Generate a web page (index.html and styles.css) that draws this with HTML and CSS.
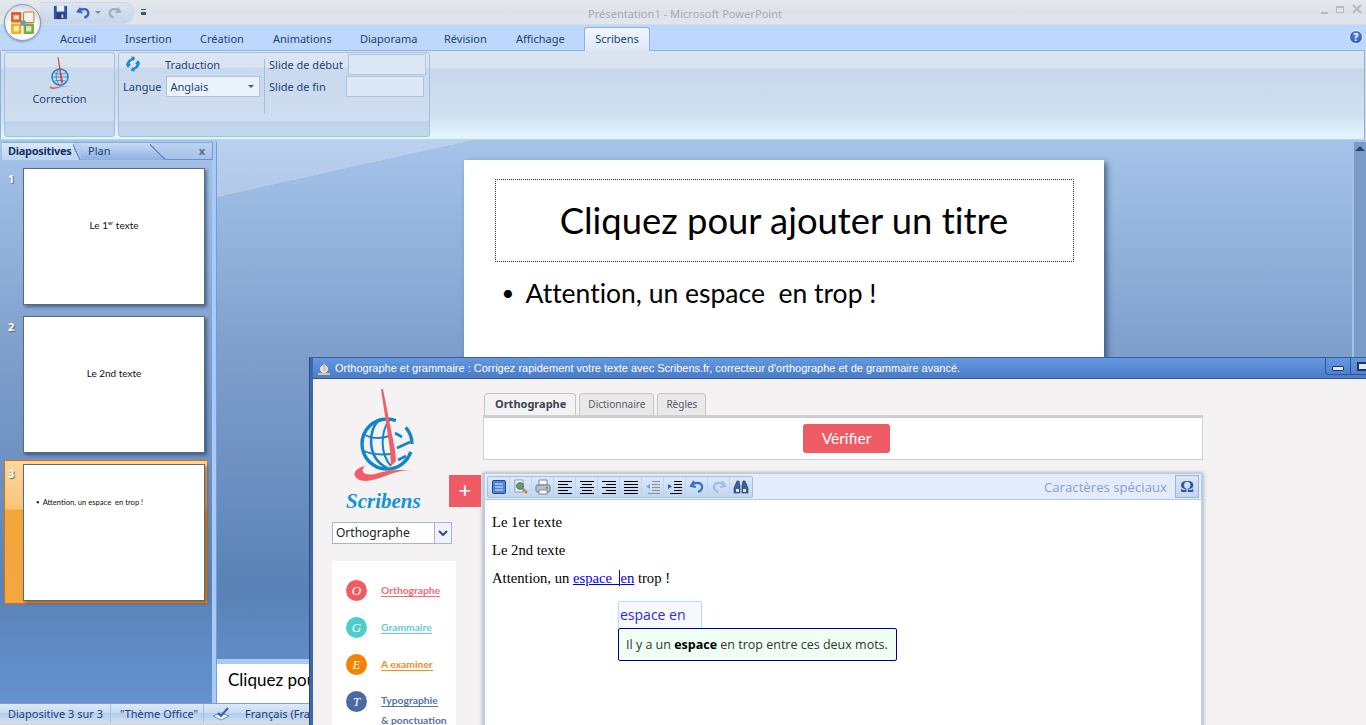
FILE: index.html
```html
<!DOCTYPE html>
<html lang="fr">
<head>
  <meta charset="utf-8">
  <title>Présentation1 - Microsoft PowerPoint</title>
  <link rel="stylesheet" href="styles.css">
</head>
<body>
<div class="app">

  <div class="titlebar">
    <div class="qat">
      <svg class="qat-icon" viewBox="0 0 16 16" width="15" height="15"><rect x="1" y="1" width="14" height="14" fill="#2f4f9f"/><rect x="4" y="1" width="8" height="6" fill="#e8eefa"/><rect x="4" y="9" width="8" height="6" fill="#27377a"/><rect x="9" y="10" width="2" height="4" fill="#c9d5ee"/></svg>
      <svg class="qat-icon" viewBox="0 0 16 16" width="15" height="15"><path d="M5 3 2 7l5 1M3 6.500c3-3 9-3 10 1 .6 2.700-1.500 5-4 6" fill="none" stroke="#3466b8" stroke-width="2.400"/></svg>
      <span class="qat-drop"></span>
      <svg class="qat-icon" viewBox="0 0 16 16" width="15" height="15"><path d="M11 3l3 4-5 1M13 6.500c-3-3-9-3-10 1-.6 2.700 1.500 5 4 6" fill="none" stroke="#a3adb9" stroke-width="2.400"/></svg>
    </div>
    <span class="qat-more"></span>
    <span class="app-title">Présentation1 - Microsoft PowerPoint</span>
    <div class="win-btns">
      <span class="win-min"></span>
      <span class="win-max"></span>
      <svg viewBox="0 0 10 10" width="10" height="10"><path d="M1 1l8 8M9 1 1 9" stroke="#b6bac0" stroke-width="2"/></svg>
    </div>
  </div>

  <div class="office-btn">
    <svg viewBox="0 0 24 24" width="25" height="25">
      <rect x="1" y="2" width="10" height="10" rx="1" fill="#e2632a"/>
      <rect x="3.500" y="5" width="5" height="4" fill="#fbe7d2"/>
      <rect x="13" y="2" width="10" height="10" rx="1" fill="#f6f2e6" stroke="#d8742e"/>
      <rect x="1" y="13" width="10" height="10" rx="1" fill="#f2b21c"/>
      <rect x="3.500" y="15.500" width="5" height="5" fill="#fbeab8"/>
      <rect x="13" y="13" width="10" height="10" rx="1" fill="#78ac3c"/>
      <rect x="15.500" y="15.500" width="5" height="5" fill="#dcebc2"/>
      <rect x="10" y="10" width="5" height="5" fill="#5f9bd0"/>
    </svg>
  </div>

  <div class="tabbar">
    <span class="tab t-accueil">Accueil</span>
    <span class="tab t-insertion">Insertion</span>
    <span class="tab t-creation">Création</span>
    <span class="tab t-animations">Animations</span>
    <span class="tab t-diaporama">Diaporama</span>
    <span class="tab t-revision">Révision</span>
    <span class="tab t-affichage">Affichage</span>
    <span class="tab tab-active">Scribens</span>
    <span class="help">?</span>
  </div>

  <div class="ribbon">
    <div class="group group-correction">
      <svg class="mini-logo" viewBox="0 0 24 34" width="24" height="34">
        <circle cx="12" cy="21" r="8" fill="none" stroke="#1d7fc0" stroke-width="1.400"/>
        <path d="M11 13c-4 4-4 12 1 16M4 21h16M5.500 16.500c4 2 9 2 13 0M5.500 25.500c4-1.500 9-1.500 13 0" fill="none" stroke="#1d7fc0" stroke-width=".8"/>
        <path d="M9.500 1 10.500 1 15 27 13 27z" fill="#c9474f"/>
        <path d="M24 31c-6-2-12 1-18 2-3 .4-5-1-4-3 1 1.500 4 1.500 7 1 5-.8 10-2 15 0z" fill="#df5c64"/>
      </svg>
      <span class="group-text">Correction</span>
    </div>
    <div class="group group-trad">
      <div class="trad-col">
        <div class="trad-row">
          <svg viewBox="0 0 16 16" width="16" height="16"><path d="M1 9C2 5 4 3 7 2L6 .5 10 1 9 5 8 4C6 5 5 6 4.500 8L6 8 3 12z" fill="#1a8ad0"/><path d="M15 7C14 11 12 13 9 14L10 15.500 6 15 7 11 8 12C10 11 11 10 11.500 8L10 8 13 4z" fill="#1a8ad0"/></svg>
          <span class="group-text trad-label">Traduction</span>
        </div>
        <div class="trad-row lang-row">
          <span class="group-text">Langue</span>
          <div class="lang-select"><span>Anglais</span><i class="caret"></i></div>
        </div>
      </div>
      <div class="group-sep"></div>
      <div class="slide-range">
        <div class="range-row">
          <span class="group-text range-label-a">Slide de début</span>
          <span class="range-input"></span>
        </div>
        <div class="range-row">
          <span class="group-text range-label-b">Slide de fin</span>
          <span class="range-input"></span>
        </div>
      </div>
    </div>
  </div>

  <div class="main">
    <div class="sidebar">
      <div class="side-tabs">
        <span class="side-tab side-tab-on">Diapositives</span>
        <span class="side-tab side-tab-plan">Plan</span>
        <span class="side-close">x</span>
      </div>
      <div class="thumb-row">
        <span class="thumb-num">1</span>
        <div class="thumb thumb-center"><span>Le 1<sup>er</sup> texte</span></div>
      </div>
      <div class="thumb-row">
        <span class="thumb-num">2</span>
        <div class="thumb thumb-center"><span>Le 2nd texte</span></div>
      </div>
      <div class="thumb-row thumb-row-on">
        <span class="thumb-num">3</span>
        <div class="thumb thumb-list"><span>▪&nbsp; Attention, un espace&nbsp; en trop !</span></div>
      </div>
    </div>
    <div class="splitter"></div>
    <div class="workspace">
      <div class="stage">
        <div class="slide">
          <div class="slide-title">Cliquez pour ajouter un titre</div>
          <div class="slide-bullet"><span class="bullet-dot">•</span><span>Attention, un espace&nbsp; en trop !</span></div>
        </div>
      </div>
      <div class="notes">Cliquez pou</div>
    </div>
    <div class="scrollbar"><i class="scroll-up"></i></div>
  </div>

  <div class="statusbar">
    <span class="status-cell status-a">Diapositive 3 sur 3</span>
    <span class="status-cell status-b">"Thème Office"</span>
    <span class="status-cell status-c">
      <svg viewBox="0 0 18 14" width="18" height="14"><path d="M1 9l8-3 8 3-8 4z" fill="#f2f5fb" stroke="#6f8db8"/><path d="M6 6l3 3 7-8" fill="none" stroke="#34619f" stroke-width="2"/></svg>
      <span>Français (Fra</span>
    </span>
  </div>

  <!-- fenetre Scribens par dessus PowerPoint -->
  <div class="dialog">
    <div class="dlg-title">
      <svg viewBox="0 0 14 14" width="14" height="14"><circle cx="7" cy="8" r="4.500" fill="#d7e6f5" stroke="#4e8ac6"/><path d="M7 0 9 10H6z" fill="#e7b96b"/><path d="M1 13h12" stroke="#e9c27b" stroke-width="2"/></svg>
      <span class="dlg-title-text">Orthographe et grammaire : Corrigez rapidement votre texte avec Scribens.fr, correcteur d'orthographe et de grammaire avancé.</span>
      <div class="dlg-btns">
        <span class="dlg-btn"><i class="dlg-min"></i></span>
        <span class="dlg-btn"><i class="dlg-max"></i></span>
      </div>
    </div>
    <div class="dlg-body">
      <div class="dlg-left">
        <svg class="logo" viewBox="0 0 84 98" width="84" height="98">
          <g fill="none" stroke="#1484c8">
            <circle cx="42" cy="56" r="25" stroke-width="3.400" stroke-dasharray="118 12 27" stroke-dashoffset="-8"/>
            <path d="M35 31C22 42 22 70 42 80" stroke-width="2.600"/>
            <path d="M45 31C35 44 35 66 46 78" stroke-width="2"/>
            <path d="M18 46C27 51 36 51 44 48" stroke-width="2"/>
            <path d="M17 62C26 67 36 67 46 66" stroke-width="2"/>
            <path d="M50 45 57 49M52 60 65 54M53 72 61 68" stroke-width="2.600"/>
          </g>
          <path d="M36 1 38 1 50 62 51 73 46 78 45 62z" fill="#ef5f68"/>
          <path d="M73 85C60 80 50 84 40 88 28 93 14 96 10 88 8 84 12 80 20 78 14 84 20 88 30 86 44 82 58 80 73 85z" fill="#ef5f68"/>
        </svg>
        <div class="logo-word">Scribens</div>
        <div class="mode-select">
          <span class="mode-val">Orthographe</span>
          <span class="mode-btn"><svg viewBox="0 0 10 6" width="10" height="6"><path d="M1 1l4 4 4-4" fill="none" stroke="#2c4a80" stroke-width="2"/></svg></span>
        </div>
        <div class="legend">
          <div class="legend-item"><span class="dot dot-o">O</span><span class="lab lab-o">Orthographe</span></div>
          <div class="legend-item"><span class="dot dot-g">G</span><span class="lab lab-g">Grammaire</span></div>
          <div class="legend-item"><span class="dot dot-e">E</span><span class="lab lab-e">A examiner</span></div>
          <div class="legend-item legend-last"><span class="dot dot-t">T</span><span class="lab-wrap"><span class="lab lab-t">Typographie </span><span class="lab-sub">&amp; ponctuation</span></span></div>
        </div>
      </div>
      <div class="dlg-right">
        <div class="dlg-tabs">
          <span class="dlg-tab dlg-tab-on">Orthographe</span>
          <span class="dlg-tab">Dictionnaire</span>
          <span class="dlg-tab">Règles</span>
        </div>
        <div class="verify-panel"><span class="verify-btn">Vérifier</span></div>
        <div class="editor">
          <span class="plus-btn">+</span>
          <div class="toolbar">
            <div class="tool-group">
              <span class="tool"><svg viewBox="0 0 16 16" width="16" height="16"><rect x="1.500" y="1.500" width="13" height="13" rx="1" fill="#4f84d2" stroke="#27498f"/><path d="M4 5h8M4 8h8M4 11h8" stroke="#dfeafa"/></svg></span>
              <span class="tool"><svg viewBox="0 0 16 16" width="16" height="16"><path d="M2 1h8v12H2z" fill="#fff" stroke="#8a93a5"/><circle cx="7" cy="7" r="3.500" fill="#57a36a" stroke="#5f6f85"/><path d="M10 10l4 4" stroke="#c98a2c" stroke-width="2.500"/></svg></span>
              <span class="tool"><svg viewBox="0 0 16 16" width="16" height="16"><path d="M4 1h8v5H4z" fill="#fff" stroke="#7a8596"/><rect x="1" y="6" width="14" height="7" rx="1.500" fill="#b9c1cc" stroke="#6a7484"/><rect x="4" y="11" width="8" height="4" fill="#fff" stroke="#7a8596"/><rect x="11" y="8" width="2" height="1.500" fill="#27a04a"/></svg></span>
              <span class="tool"><svg viewBox="0 0 16 16" width="16" height="16"><path d="M1 2.500h14M1 5.500h10M1 8.500h14M1 11.500h10M1 14.500h14" stroke="#000"/></svg></span>
              <span class="tool"><svg viewBox="0 0 16 16" width="16" height="16"><path d="M1 2.500h14M3 5.500h10M1 8.500h14M3 11.500h10M1 14.500h14" stroke="#000"/></svg></span>
              <span class="tool"><svg viewBox="0 0 16 16" width="16" height="16"><path d="M1 2.500h14M5 5.500h10M1 8.500h14M5 11.500h10M1 14.500h14" stroke="#000"/></svg></span>
              <span class="tool"><svg viewBox="0 0 16 16" width="16" height="16"><path d="M1 2.500h14M1 5.500h14M1 8.500h14M1 11.500h14M1 14.500h14" stroke="#000"/></svg></span>
              <span class="tool tool-off"><svg viewBox="0 0 16 16" width="16" height="16"><path d="M7 2.500h8M7 5.500h8M7 8.500h8M7 11.500h8M3 14.500h12" stroke="#444"/><path d="M1 7.500 5 5v5z" fill="#2a62c0"/></svg></span>
              <span class="tool"><svg viewBox="0 0 16 16" width="16" height="16"><path d="M7 2.500h8M7 5.500h8M7 8.500h8M7 11.500h8M3 14.500h12" stroke="#000"/><path d="M5 7.500 1 5v5z" fill="#2a62c0"/></svg></span>
              <span class="tool"><svg viewBox="0 0 16 16" width="16" height="16"><path d="M5 2 2 7l5 1M3 6c3-3 9-3 10 1 .6 2.700-1.500 5-4 6" fill="none" stroke="#3a70c4" stroke-width="2.200"/></svg></span>
              <span class="tool tool-off"><svg viewBox="0 0 16 16" width="16" height="16"><path d="M11 2l3 5-5 1M13 6c-3-3-9-3-10 1-.6 2.700 1.500 5 4 6" fill="none" stroke="#6f9bd8" stroke-width="2.200"/></svg></span>
              <span class="tool"><svg viewBox="0 0 16 16" width="16" height="16"><path d="M4 2h2l1 5v7H1V9zM10 2h2l3 7v5H9V7z" fill="#3c5f9e" stroke="#1d3161" stroke-width=".6"/><path d="M3 10h3v3H3zM10 10h3v3h-3z" fill="#dbe6f6"/></svg></span>
            </div>
            <span class="special-label">Caractères spéciaux</span>
            <span class="omega">Ω</span>
          </div>
          <div class="editor-text">
            <p>Le 1er texte</p>
            <p>Le 2nd texte</p>
            <p>Attention, un <a class="err" href="#">espace&nbsp; <span class="err-caret">en</span></a> trop !</p>
            <div class="hint">
              <div class="hint-word">espace en</div>
              <div class="hint-msg">Il y a un <b>espace</b> en trop entre ces deux mots.</div>
            </div>
          </div>
        </div>
      </div>
    </div>
  </div>

</div>
</body>
</html>
```

FILE: styles.css
```css
* {
  box-sizing: border-box;
}

html, body {
  margin: 0;
  height: 100%;
  overflow: hidden;
}

body {
  font-family: "Noto Sans", "DejaVu Sans", sans-serif;
  font-size: 11px;
  color: #15428b;
}

.app {
  position: relative;
  width: 1366px;
  height: 725px;
  display: flex;
  flex-direction: column;
  overflow: hidden;
  background: #d9d6cc;
}

/* barre de titre */
.titlebar {
  height: 25px;
  flex: none;
  display: flex;
  align-items: center;
  position: relative;
  padding-left: 40px;
  background: linear-gradient(#e6e8ec, #dde2ea 50%, #e2e6ec);
  border-bottom: 1px solid #cfdcee;
}

.qat {
  width: 94px;
  height: 22px;
  margin-top: 1px;
  display: flex;
  align-items: center;
  padding-left: 13px;
  gap: 8px;
  background: linear-gradient(#dce4f0, #c6d6ec);
  border: 1px solid #cdd7e6;
  border-left: none;
  border-radius: 0 11px 11px 0;
}

.qat-drop {
  width: 0;
  height: 0;
  margin: 0 -2px 0 -4px;
  border: 3px solid transparent;
  border-top: 3px solid #7c8aa0;
  border-bottom: none;
}

.qat-more {
  width: 5px;
  height: 6px;
  margin-left: 7px;
  border-top: 1px solid #44546e;
  border-bottom: 3px solid #44546e;
}

.app-title {
  position: absolute;
  left: 588px;
  top: 6px;
  color: #a7abb2;
  font-size: 11.100px;
}

.win-btns {
  position: absolute;
  right: 4px;
  top: 4px;
  display: flex;
  align-items: center;
  gap: 8px;
}

.win-min {
  width: 7px;
  height: 2px;
  margin-top: 7px;
  background: #b6bac0;
}

.win-max {
  width: 8px;
  height: 7px;
  border: 1px solid #b6bac0;
  border-top-width: 2px;
}

.office-btn {
  position: absolute;
  left: 4px;
  top: 4px;
  width: 37px;
  height: 37px;
  z-index: 3;
  border-radius: 50%;
  display: flex;
  align-items: center;
  justify-content: center;
  background: radial-gradient(circle at 50% 70%, #f6f9fd 50%, #b9c4d2 100%);
  border: 1px solid #8d99aa;
  box-shadow: 0 1px 2px rgba(70, 90, 120, .5);
}

/* onglets du ruban */
.tabbar {
  height: 25px;
  flex: none;
  position: relative;
  background: #bdd8fc;
}

.tab {
  position: absolute;
  top: 6px;
  color: #1e3f74;
}

.t-accueil { left: 60px; }
.t-insertion { left: 125px; }
.t-creation { left: 200px; }
.t-animations { left: 273px; }
.t-diaporama { left: 360px; }
.t-revision { left: 444px; }
.t-affichage { left: 516px; }

.tab-active {
  left: 584px;
  top: 2px;
  width: 66px;
  height: 24px;
  text-align: center;
  line-height: 21px;
  background: linear-gradient(#f0f6fe, #dce8f8);
  border: 1px solid #8fb0dc;
  border-bottom: none;
  border-radius: 3px 3px 0 0;
  z-index: 1;
}

.help {
  position: absolute;
  right: 3px;
  top: 5px;
  width: 14px;
  height: 14px;
  border-radius: 50%;
  background: radial-gradient(circle at 50% 35%, #5d8fe8, #1d44b0);
  border: 1px solid #e8f0fb;
  color: #fff;
  font-size: 10px;
  font-weight: bold;
  line-height: 12px;
  text-align: center;
}

.ribbon {
  height: 90px;
  flex: none;
  display: flex;
  gap: 3px;
  padding: 1px 2px 2px 3px;
  background: linear-gradient(#dae4f1 0, #d8e3f0 17px, #c6d7ed 18px, #d1e1f0 66px, #e3f3fd 84px);
  border: 1px solid #8eb0dc;
  border-top-color: #8db2e4;
  border-bottom-color: #a8e0e8;
  border-radius: 2px;
  margin-right: 1px;
}

.group {
  height: 85px;
  position: relative;
  background: linear-gradient(#dce6f3 0, #dae4f1 14px, #c9d9ee 15px, #cfdff0 68px, #bdd2e9 69px, #c5d8ec 85px);
  border: 1px solid #a8bfdc;
  border-radius: 3px;
}

.group-text {
  color: #1e3f74;
}

.group-correction {
  width: 111px;
  display: flex;
  flex-direction: column;
  align-items: center;
  padding-top: 3px;
}

.mini-logo {
  display: block;
}

.group-correction .group-text {
  margin-top: 1px;
}

.group-trad {
  width: 312px;
  display: flex;
  padding: 0 0 0 4px;
}

.trad-col {
  width: 137px;
  flex: none;
}

.trad-row {
  display: flex;
  align-items: center;
  height: 22px;
}

.trad-row svg {
  margin-left: 2px;
}

.trad-label {
  margin-left: 24px;
}

.lang-row {
  gap: 4px;
}

.lang-select {
  width: 94px;
  height: 21px;
  flex: none;
  display: flex;
  align-items: center;
  justify-content: space-between;
  padding: 0 5px 0 4px;
  background: #eaf2fb;
  border: 1px solid #adc3df;
  color: #1e3f74;
}

.caret {
  border: 3px solid transparent;
  border-top: 3px solid #3a5c92;
  border-bottom: none;
}

.group-sep {
  width: 1px;
  height: 55px;
  margin: 6px 4px 0 4px;
  background: #a4bedd;
}

.range-row {
  height: 22px;
  display: flex;
  align-items: center;
}

.range-input {
  width: 78px;
  height: 21px;
  background: #dce8f5;
  border: 1px solid #adc3df;
}

.range-label-a { width: 79px; }
.range-label-b { width: 77px; }

/* zone principale */
.main {
  flex: 1;
  min-height: 0;
  display: flex;
  background: linear-gradient(#a6c4ea 0, #7e9ecb 218px, #5a82b6 450px, #6492d0 563px);
}

.sidebar {
  width: 212px;
  flex: none;
  padding: 2px 0 0 4px;
}

.side-tabs {
  height: 18px;
  margin: 0 0 8px -2px;
  width: 211px;
  position: relative;
  display: flex;
  border-bottom: 1px solid #6c8fc6;
  background: linear-gradient(#bcd3f0, #a5c2e8);
  border-top: 1px solid #8eacd8;
  border-right: 1px solid #7c9cce;
}

.side-tab {
  padding: 0 8px 0 6px;
  font-weight: bold;
  color: #15306a;
  line-height: 16px;
  height: 17px;
  letter-spacing: -.3px;
}

.side-tab-on {
  width: 79px;
  background:
    linear-gradient(to top right, transparent 40%, #6c8fc6 40%, #6c8fc6 50%, transparent 50%) right / 8px 100% no-repeat,
    linear-gradient(#dbe8f8, #bcd3f0);
  clip-path: polygon(0 0, 90% 0, 100% 100%, 0 100%);
}

.side-tab-plan {
  width: 86px;
  padding-left: 7px;
  font-weight: normal;
  letter-spacing: 0;
  background:
    linear-gradient(to top right, transparent 44%, #6c8fc6 44%, #6c8fc6 50%, transparent 50%) right / 17px 100% no-repeat,
    linear-gradient(#c9dcf4, #8eb0e0);
  clip-path: polygon(0 0, 80% 0, 100% 100%, 0 100%);
  color: #1e3f74;
}

.side-close {
  position: absolute;
  right: 7px;
  top: 0;
  color: #5a6f92;
  font-weight: bold;
  line-height: 15px;
}

.thumb-row {
  position: relative;
  width: 204px;
  height: 148px;
  padding: 0 0 0 19px;
}

.thumb-row-on {
  height: 144px;
  margin-top: -4px;
  padding-top: 3px;
  background: linear-gradient(#fbd9a0 0, #f8c478 48px, #f2a63c 49px, #f2a83f 100%);
  border: 1px solid #e46c0a;
  border-radius: 1px;
  padding-left: 18px;
}

.thumb-num {
  position: absolute;
  left: 4px;
  top: 3px;
  font-weight: bold;
  color: #fff;
  font-size: 11px;
  text-shadow: 1px 1px 1px #52637c;
}

.thumb-row-on .thumb-num {
  left: 3px;
  top: 5px;
}

.thumb {
  width: 182px;
  height: 137px;
  background: #fff;
  border: 1px solid #5d6a7c;
  box-shadow: 2px 2px 3px rgba(30, 50, 80, .55);
  color: #111;
  font-family: "Lato", "Noto Sans", sans-serif;
  font-size: 10px;
  white-space: nowrap;
}

.thumb sup {
  font-size: 6px;
  line-height: 0;
}

.thumb-center {
  display: flex;
  align-items: center;
  justify-content: center;
  padding-bottom: 24px;
}

.thumb-list {
  font-size: 7.600px;
  padding: 32px 0 0 12px;
}

.splitter {
  width: 5px;
  flex: none;
  margin-top: 2px;
  background: #a9c9f7;
  border-right: 1px solid #6f9ee0;
}

.workspace {
  flex: 1;
  min-width: 0;
  display: flex;
  flex-direction: column;
}

.stage {
  flex: 1;
  min-height: 0;
  display: flex;
  justify-content: center;
  padding: 20px 2px 0 0;
  overflow: hidden;
  background: linear-gradient(to bottom right, rgba(255, 255, 255, .22) 50%, transparent 50%) 0 0 / 256px 57px no-repeat;
}

.slide {
  width: 640px;
  height: 480px;
  background: #fff;
  padding: 19px 30px 0 31px;
  box-shadow: 3px 3px 6px rgba(20, 40, 70, .6);
  font-family: "Lato", "Noto Sans", sans-serif;
  font-variant-ligatures: none;
  color: #000;
}

.slide-title {
  height: 83px;
  border: 1px dotted #333;
  font-size: 36.400px;
  line-height: 81px;
  text-align: center;
}

.slide-bullet {
  display: flex;
  font-size: 26.500px;
  margin: 15px 0 0 7px;
  white-space: nowrap;
}

.bullet-dot {
  width: 24px;
  flex: none;
  font-size: 22px;
  line-height: 32px;
}

.notes {
  height: 44px;
  flex: none;
  background: #fff;
  border-top: 5px solid #a9c9f7;
  padding: 5px 0 0 11px;
  font-family: "Lato", "Noto Sans", sans-serif;
  font-size: 17px;
  color: #000;
  white-space: nowrap;
}

.scrollbar {
  width: 14px;
  flex: none;
  margin-top: 2px;
  background: #7a9bc8;
  border-left: 2px solid #a5c0e6;
  padding: 4px 0 0 1px;
}

.scroll-up {
  display: block;
  width: 0;
  height: 0;
  border: 5px solid transparent;
  border-bottom: 5px solid #2c436b;
  border-top: none;
}

.statusbar {
  height: 22px;
  flex: none;
  display: flex;
  align-items: center;
  border-bottom: 2px solid #d9d6cc;
  background: linear-gradient(#dce8f8 0, #c8dbf3 45%, #b5cdec 50%, #cfe0f6 100%);
  border-top: 1px solid #7f9fcf;
}

.status-cell {
  height: 100%;
  display: flex;
  align-items: center;
  color: #1e3f74;
  border-right: 1px solid #a6bfdf;
}

.status-a { width: 111px; padding-left: 8px; }
.status-b { width: 93px; padding-left: 9px; }
.status-c { padding-left: 8px; gap: 15px; border-right: none; }

/* fenetre Scribens */
.dialog {
  position: absolute;
  left: 310px;
  top: 357px;
  width: 1056px;
  height: 368px;
  z-index: 5;
  display: flex;
  flex-direction: column;
  background: #f4f2f3;
  border-left: 3px solid #3c68ad;
  box-shadow: -1px 0 0 #2e4a78;
  overflow: hidden;
}

.dlg-title {
  height: 22px;
  flex: none;
  display: flex;
  align-items: center;
  gap: 4px;
  position: relative;
  border-top: 1px solid #3f5f8f;
  background: linear-gradient(#6498e2, #4a7bc6);
  border-bottom: 1px solid #2f5596;
  margin-left: -3px;
  padding-left: 7px;
}

.dlg-title-text {
  color: #fff;
  font-family: "Liberation Sans", Arial, sans-serif;
  font-size: 11px;
  white-space: nowrap;
}

.dlg-btns {
  position: absolute;
  left: 1015px;
  top: 0;
  display: flex;
  height: 17px;
  border: 1px solid #2f5596;
  border-top: none;
  border-radius: 0 0 0 4px;
}

.dlg-btn {
  width: 25px;
  display: flex;
  align-items: center;
  justify-content: center;
  border-right: 1px solid #2f5596;
}

.dlg-min {
  width: 12px;
  height: 5px;
  border: 1px solid #1e3360;
  background: #dfe9f8;
  border-radius: 1px;
  margin-top: 5px;
}

.dlg-max {
  width: 12px;
  height: 9px;
  border: 2px solid #1e3360;
  background: #dfe9f8;
}

.dlg-body {
  flex: 1;
  min-height: 0;
  display: flex;
}

.dlg-left {
  width: 170px;
  flex: none;
  padding: 9px 0 0 19px;
}

.logo {
  display: block;
  margin-left: 13px;
}

.logo-word {
  margin: 3px 0 0 14px;
  font-family: "Liberation Serif", serif;
  font-style: italic;
  font-weight: bold;
  font-size: 21px;
  line-height: 24px;
  color: #1792d6;
}

.mode-select {
  width: 120px;
  height: 22px;
  margin-top: 9px;
  display: flex;
  background: #fff;
  border: 1px solid #aab3cc;
}

.mode-val {
  flex: 1;
  padding-left: 3px;
  font-size: 12px;
  line-height: 19px;
  color: #222;
}

.mode-btn {
  width: 17px;
  display: flex;
  align-items: center;
  justify-content: center;
  border-left: 1px solid #aab3cc;
  background: #f1f2f6;
}

.legend {
  width: 124px;
  height: 170px;
  margin-top: 17px;
  padding: 19px 0 0 14px;
  background: #fff;
  font-family: "Lato", "Noto Sans", sans-serif;
  font-size: 10.300px;
  font-weight: bold;
}

.legend-item {
  display: flex;
  align-items: center;
  gap: 14px;
  height: 21px;
  margin-bottom: 16px;
}

.legend-last {
  align-items: flex-start;
}

.dot {
  width: 21px;
  height: 21px;
  flex: none;
  border-radius: 50%;
  color: #fff;
  font-family: "Liberation Serif", serif;
  font-style: italic;
  font-size: 13px;
  font-weight: normal;
  line-height: 21px;
  text-align: center;
}

.dot-o { background: #ef5b64; }
.dot-g { background: #4ccfc8; }
.dot-e { background: #f58300; }
.dot-t { background: #4a6aa3; }

.lab {
  border-bottom: 1px solid currentColor;
  line-height: 11px;
  white-space: nowrap;
}

.lab-o { color: #ef6b74; }
.lab-g { color: #5fd0ca; }
.lab-e { color: #f58a1c; }
.lab-t { color: #5673a8; }

.lab-wrap {
  display: flex;
  flex-direction: column;
  align-items: flex-start;
  gap: 6px;
  padding-top: 4px;
}

.lab-sub {
  color: #5673a8;
  line-height: 14px;
  white-space: nowrap;
}

.dlg-right {
  width: 720px;
  flex: none;
  padding-top: 14px;
}

.dlg-tabs {
  height: 22px;
  display: flex;
  gap: 3px;
  padding-left: 1px;
}

.dlg-tab {
  padding: 0 8px;
  height: 22px;
  line-height: 20px;
  color: #555c68;
  background: #e9e9e9;
  border: 1px solid #c6c6c6;
  border-bottom: none;
  border-radius: 4px 4px 0 0;
  font-size: 10px;
}

.dlg-tab-on {
  padding: 0 9px 0 10px;
  font-size: 11px;
  font-weight: bold;
  color: #3a4254;
  background: #f3f3f3;
}

.verify-panel {
  height: 45px;
  display: flex;
  justify-content: center;
  padding-top: 6px;
  background: #fff;
  border: 1px solid #cfcfcf;
  border-top-width: 3px;
}

.verify-btn {
  width: 87px;
  height: 29px;
  margin-left: 7px;
  background: #ef5b64;
  color: #fff;
  border-radius: 3px;
  text-align: center;
  font-size: 15.500px;
  line-height: 28px;
  font-family: "Lato", "Noto Sans", sans-serif;
}

.editor {
  position: relative;
  height: 260px;
  margin-top: 13px;
  background: #fff;
  border: 1px solid #b9cde4;
  border-right-width: 2px;
  border-left-width: 2px;
  box-shadow: 0 0 4px rgba(90, 90, 90, .55);
}

.plus-btn {
  position: absolute;
  left: -36px;
  top: 1px;
  width: 32px;
  height: 32px;
  background: #ef5b64;
  color: #fff;
  font-family: "Liberation Sans", Arial, sans-serif;
  font-size: 22px;
  line-height: 31px;
  text-align: center;
}

.toolbar {
  height: 26px;
  display: flex;
  align-items: center;
  padding: 0 2px 0 2px;
  background: #e3ecfa;
  border-bottom: 1px solid #b3c8e0;
}

.tool-group {
  display: flex;
  height: 22px;
  background: linear-gradient(#dce8f8, #c2d5f0);
  border: 1px solid #a6bde0;
  border-radius: 2px;
}

.tool {
  width: 22px;
  display: flex;
  align-items: center;
  justify-content: center;
  border-right: 1px solid #c3d4ec;
}

.tool:last-child {
  border-right: none;
}

.tool-off svg {
  opacity: .5;
}

.special-label {
  margin-left: auto;
  color: #8c9ccc;
  font-family: "Open Sans", "Noto Sans", sans-serif;
  font-size: 13.200px;
}

.omega {
  width: 24px;
  height: 23px;
  margin-left: 8px;
  text-align: center;
  background: linear-gradient(#dae6f6, #c4d6ef);
  border: 1px solid #9cb3d6;
  color: #2b50a8;
  font-family: "Liberation Serif", serif;
  font-weight: bold;
  font-size: 17px;
  line-height: 21px;
}

.editor-text {
  padding: 6px 7px;
  font-family: "Liberation Serif", "Times New Roman", serif;
  font-size: 14.670px;
  color: #000;
}

.editor-text p {
  margin: 0;
  height: 28px;
  line-height: 32px;
}

.err {
  color: #00e;
}

.err-caret {
  border-left: 1px solid #00e;
}

.hint {
  width: 279px;
  margin: 11px 0 0 126px;
  font-family: "Open Sans", "Noto Sans", sans-serif;
  font-size: 12.500px;
}

.hint-word {
  width: 84px;
  height: 27px;
  padding-left: 1px;
  font-size: 14px;
  line-height: 25px;
  color: #2a2ae8;
  background: #f8f8fb;
  border: 1px solid #aee0f6;
  border-bottom: none;
  border-radius: 2px 2px 0 0;
}

.hint-msg {
  height: 33px;
  padding-left: 7px;
  line-height: 31px;
  color: #333;
  background: #f0fff4;
  border: 1px solid #00008f;
  border-radius: 2px;
  white-space: nowrap;
}

.hint-msg b {
  color: #000;
}
```
